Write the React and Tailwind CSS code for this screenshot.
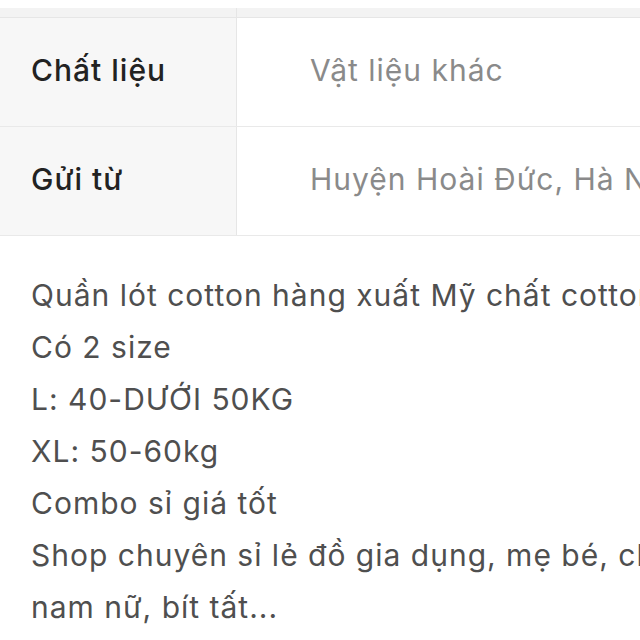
const specs = [
  { label: 'Chất liệu', value: 'Vật liệu khác' },
  { label: 'Gửi từ', value: 'Huyện Hoài Đức, Hà Nội' },
];

const lines = [
  'Quần lót cotton hàng xuất Mỹ chất cotton 100%',
  'Có 2 size',
  'L: 40-DƯỚI 50KG',
  'XL: 50-60kg',
  'Combo sỉ giá tốt',
  'Shop chuyên sỉ lẻ đồ gia dụng, mẹ bé, chăn gối',
  'nam nữ, bít tất...',
];

export default function App() {
  return (
    <div className="h-[640px] w-[640px] overflow-hidden bg-white font-['Inter',sans-serif] tracking-[1px]">
      <div className="pt-[8px]">
        <div className="flex h-[10px] border-b border-[#e6e6e6] bg-[#f3f3f3]">
          <div className="w-[237px] shrink-0 border-r border-[#e6e6e6]" />
        </div>
        {specs.map((row) => (
          <div key={row.label} className="flex h-[109px] border-b border-[#e9e9e9]">
            <div className="flex w-[237px] shrink-0 items-center border-r border-[#e6e6e6] bg-[#f7f7f7] pb-[3px] pl-[31px] text-[30px] font-medium text-[#222]">
              {row.label}
            </div>
            <div className="flex flex-1 items-center whitespace-nowrap pb-[3px] pl-[73px] text-[30px] text-[#8a8a8a]">
              {row.value}
            </div>
          </div>
        ))}
      </div>
      <div className="pt-[33px] pl-[31px] text-[30px] leading-[52px] text-[#4f4f4f]">
        {lines.map((line) => (
          <p key={line} className="whitespace-nowrap">{line}</p>
        ))}
      </div>
    </div>
  );
}
